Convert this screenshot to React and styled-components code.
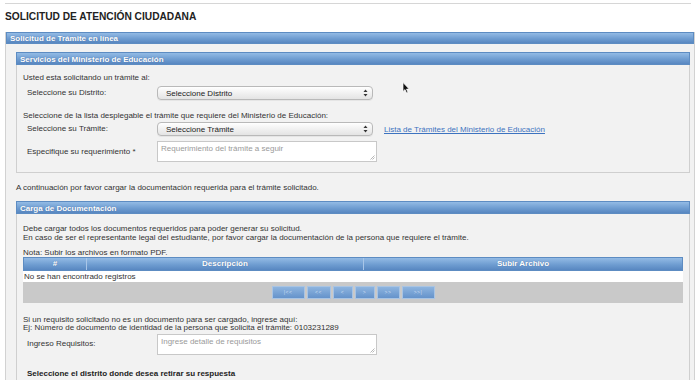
import React from "react";
import styled, { createGlobalStyle } from "styled-components";

const Global = createGlobalStyle`
  html, body { margin: 0; padding: 0; background: #ffffff; }
  body {
    font-family: "Liberation Sans", Arial, sans-serif;
    font-size: 8px;
    color: #333333;
    width: 700px;
    height: 380px;
    overflow: hidden;
  }
`;

const Page = styled.div`
  position: relative;
  padding: 3px 0 0 5px;
`;

const TopRule = styled.div`
  width: 686px;
  height: 1px;
  background: #d6d6d6;
`;

const Title = styled.h1`
  margin: 7px 0 0 0;
  font-size: 10.2px;
  line-height: 12px;
  font-weight: bold;
  color: #222;
`;

const Panel = styled.div`
  margin-top: 9px;
  width: 690px;
  box-sizing: border-box;
  border: 1px solid #d2d2d2;
  border-top: none;
  background: #f2f2f2;
`;

const Header = styled.div`
  height: ${(p) => p.$h || 12}px;
  line-height: ${(p) => p.$h || 12}px;
  padding-left: 3px;
  box-sizing: border-box;
  background: linear-gradient(#93bbe5, #6f9dd1 55%, #5887c1);
  border: 1px solid #5d8cc2;
  color: #ffffff;
  font-weight: bold;
  font-size: 8px;
  text-shadow: 0 0 1px rgba(40, 70, 120, 0.6);
  white-space: nowrap;
  overflow: hidden;
`;

const PanelBody = styled.div`
  padding: 8px 4px 0 10px;
`;

const Fieldset = styled.div`
  margin-top: ${(p) => p.$mt || 0}px;
`;

const FieldBody = styled.div`
  border: 1px solid #cfcfcf;
  border-top: none;
  padding: ${(p) => p.$pt || 6}px 6px ${(p) => p.$pb || 10}px 6px;
`;

const Line = styled.div`
  line-height: ${(p) => p.$lh || 10}px;
  margin-top: ${(p) => p.$mt || 0}px;
  margin-left: ${(p) => p.$ml || 0}px;
  font-weight: ${(p) => (p.$bold ? "bold" : "normal")};
  color: ${(p) => (p.$bold ? "#222" : "#333")};
  white-space: nowrap;
`;

const Row = styled.div`
  display: flex;
  align-items: center;
  margin-top: ${(p) => p.$mt || 0}px;
`;

const Label = styled.div`
  width: 134px;
  padding-left: 4px;
  box-sizing: border-box;
  line-height: 10px;
  white-space: nowrap;
`;

const SelectBox = styled.div`
  width: 216px;
  height: 14px;
  box-sizing: border-box;
  border: 1px solid #b9b9b9;
  border-radius: 4px;
  background: linear-gradient(#ffffff, #f1f1f1 50%, #e4e4e4);
  box-shadow: 0 1px 0 rgba(0, 0, 0, 0.05);
  display: flex;
  align-items: center;
  justify-content: space-between;
  padding: 0 4px 0 8px;
  color: #222;
`;

const Arrows = styled.svg`
  width: 5px;
  height: 8px;
`;

const Link = styled.a`
  margin-left: 11px;
  color: #3d73c0;
  text-decoration: underline;
  white-space: nowrap;
`;

const TextArea = styled.div`
  position: relative;
  width: 220px;
  height: 21px;
  box-sizing: border-box;
  background: #ffffff;
  border: 1px solid #c8c8c8;
  padding: 2px 3px;
  color: #9a9a9a;
  line-height: 9px;
`;

const Grip = styled.svg`
  position: absolute;
  right: 1px;
  bottom: 1px;
  width: 5px;
  height: 5px;
`;

const Table = styled.div`
  width: 660px;
`;

const THead = styled.div`
  display: grid;
  grid-template-columns: 62px 277px 1fr;
  height: 14px;
  background: linear-gradient(#93bbe5, #6f9dd1 55%, #5887c1);
  border: 1px solid #5d8cc2;
  box-sizing: border-box;
`;

const TH = styled.div`
  text-align: center;
  line-height: 12px;
  color: #ffffff;
  font-weight: bold;
  border-left: ${(p) => (p.$first ? "none" : "1px solid #a9c6e8")};
  text-shadow: 0 0 1px rgba(40, 70, 120, 0.6);
`;

const TRow = styled.div`
  height: 11px;
  line-height: 11px;
  background: #ffffff;
  padding-left: 1px;
`;

const Pager = styled.div`
  height: 21px;
  background: #c9c9c9;
  display: flex;
  justify-content: center;
  align-items: center;
  gap: 2px;
`;

const PageBtn = styled.div`
  width: ${(p) => p.$w}px;
  height: 13px;
  box-sizing: border-box;
  border: 1px solid #a8c4e4;
  background: linear-gradient(#8db4df, #6593cb);
  color: #c9dcf1;
  font-size: 5px;
  line-height: 11px;
  text-align: center;
  letter-spacing: 0.5px;
`;

const Cursor = styled.svg`
  position: absolute;
  left: 402px;
  top: 82px;
  width: 8px;
  height: 12px;
`;

const ArrowIcon = () => (
  <Arrows viewBox="0 0 5 8">
    <path d="M2.5 0.5 L4.5 3 L0.5 3 Z" fill="#333" />
    <path d="M2.5 7.5 L4.5 5 L0.5 5 Z" fill="#333" />
  </Arrows>
);

const Select = ({ children }) => (
  <SelectBox>
    <span>{children}</span>
    <ArrowIcon />
  </SelectBox>
);

const Area = ({ placeholder }) => (
  <TextArea>
    {placeholder}
    <Grip viewBox="0 0 5 5">
      <path d="M4.5 0.5 L0.5 4.5 M4.5 2.5 L2.5 4.5" stroke="#999" strokeWidth="0.7" />
    </Grip>
  </TextArea>
);

export default function App() {
  return (
    <>
      <Global />
      <Page>
        <TopRule />
        <Title>SOLICITUD DE ATENCIÓN CIUDADANA</Title>
        <Panel>
          <Header>Solicitud de Trámite en línea</Header>
          <PanelBody>
            <Fieldset>
              <Header $h={13}>Servicios del Ministerio de Educación</Header>
              <FieldBody $pt={8} $pb={10}>
                <Line>Usted esta solicitando un trámite al:</Line>
                <Row $mt={3}>
                  <Label>Seleccione su Distrito:</Label>
                  <Select>Seleccione Distrito</Select>
                </Row>
                <Line $mt={11}>
                  Seleccione de la lista desplegable el trámite que requiere del Ministerio de Educación:
                </Line>
                <Row $mt={1}>
                  <Label>Seleccione su Trámite:</Label>
                  <Select>Seleccione Trámite</Select>
                  <Link>Lista de Trámites del Ministerio de Educación</Link>
                </Row>
                <Row $mt={5}>
                  <Label>Especifique su requerimiento *</Label>
                  <Area placeholder="Requerimiento del trámite a seguir" />
                </Row>
              </FieldBody>
            </Fieldset>
            <Line $mt={10}>
              A continuación por favor cargar la documentación requerida para el trámite solicitado.
            </Line>
            <Fieldset $mt={8}>
              <Header $h={13}>Carga de Documentación</Header>
              <FieldBody $pt={10} $pb={10}>
                <Line $lh={9}>Debe cargar todos los documentos requeridos para poder generar su solicitud.</Line>
                <Line $lh={9}>
                  En caso de ser el representante legal del estudiante, por favor cargar la documentación de la persona que requiere el trámite.
                </Line>
                <Line $lh={9} $mt={6}>Nota: Subir los archivos en formato PDF.</Line>
                <Table>
                  <THead>
                    <TH $first>#</TH>
                    <TH>Descripción</TH>
                    <TH>Subir Archivo</TH>
                  </THead>
                  <TRow>No se han encontrado registros</TRow>
                  <Pager>
                    <PageBtn $w={33}>|&lt;&lt;</PageBtn>
                    <PageBtn $w={24}>&lt;&lt;</PageBtn>
                    <PageBtn $w={20}>&lt;</PageBtn>
                    <PageBtn $w={20}>&gt;</PageBtn>
                    <PageBtn $w={23}>&gt;&gt;</PageBtn>
                    <PageBtn $w={33}>&gt;&gt;|</PageBtn>
                  </Pager>
                </Table>
                <Line $lh={9} $mt={12}>
                  Si un requisito solicitado no es un documento para ser cargado, ingrese aquí:
                </Line>
                <Line $lh={8.5}>
                  Ej: Número de documento de identidad de la persona que solicita el trámite: 0103231289
                </Line>
                <Row $mt={1}>
                  <Label>Ingreso Requisitos:</Label>
                  <Area placeholder="Ingrese detalle de requisitos" />
                </Row>
                <Line $mt={14} $ml={4} $bold>
                  Seleccione el distrito donde desea retirar su respuesta
                </Line>
              </FieldBody>
            </Fieldset>
          </PanelBody>
        </Panel>
        <Cursor viewBox="0 0 8 12">
          <path d="M1 0.5 L1 9.5 L3 7.6 L4.6 11 L6 10.4 L4.5 7.1 L7.2 7.1 Z" fill="#111" stroke="#fff" strokeWidth="0.7" />
        </Cursor>
      </Page>
    </>
  );
}
